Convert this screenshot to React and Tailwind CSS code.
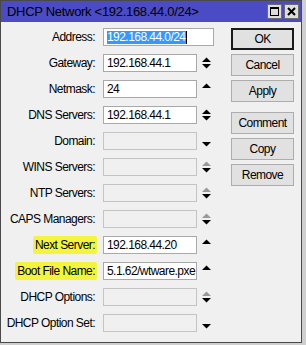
import React from "react";

const font = { fontFamily: '"Liberation Sans", Arial, sans-serif' };

function Arrows({ up, down }) {
  // up/down: "b" black, "g" gray, null none
  const col = (c) => (c === "g" ? "#9a9a9a" : "#000");
  return (
    <svg width="11" height="12" viewBox="0 0 11 12">
      {up && <polygon points="1,5 5.5,0.5 10,5" fill={col(up)} />}
      {down && <polygon points="1,7 5.5,11.5 10,7" fill={col(down)} />}
    </svg>
  );
}

function Row({ label, value, enabled = true, wide = false, up, down, hl = false, selected = false }) {
  return (
    <div className="flex items-center h-[18px]">
      <div className="w-[96px] flex justify-end">
        <span className={"px-[2px] leading-[18px] " + (hl ? "bg-[#f4f43c] rounded-[2px]" : "")}>{label}</span>
      </div>
      <div
        className={
          "ml-[6px] h-[18px] border border-[#a9a9a9] flex items-center pl-[3px] overflow-hidden whitespace-nowrap " +
          (wide ? "w-[111px] " : "w-[94px] ") +
          (enabled ? "bg-white" : "bg-[#f0f0f0] border-[#c4c4c4]")
        }
      >
        {selected ? (
          <span className="bg-[#3399ff] text-white leading-[13px] px-[0px]">{value}</span>
        ) : (
          <span>{value}</span>
        )}
        {selected && <span className="w-[1px] h-[13px] bg-black" />}
      </div>
      {!wide && (
        <div className="w-[18px] flex justify-center items-center">
          {(up || down) && <Arrows up={up} down={down} />}
        </div>
      )}
    </div>
  );
}

function Btn({ children, primary }) {
  return (
    <div
      className={
        "w-[63px] h-[22px] flex items-center justify-center bg-[#e1e1e1] " +
        (primary ? "border-2 border-[#1a1a1a]" : "border border-[#adadad]")
      }
    >
      {children}
    </div>
  );
}

export default function App() {
  return (
    <div className="w-[306px] h-[345px] bg-[#cfcfcf] overflow-hidden text-[12px] tracking-[-0.55px] text-black" style={font}>
      <div className="w-[302px] h-[343px] border border-[#4a4a4a] flex flex-col bg-[#f0f0f0]">
        <div className="h-[21px] bg-[#4b4bc6] flex items-center justify-between pl-[6px] pr-[2px] text-[13px] tracking-[-0.3px]">
          <span className="text-black">DHCP Network &lt;192.168.44.0/24&gt;</span>
          <div className="flex gap-[2px]">
            <div className="w-[15px] h-[15px] bg-[#dcdcdc] border border-[#6c6c6c] flex items-center justify-center">
              <div className="w-[9px] h-[9px] border border-black border-t-2" />
            </div>
            <div className="w-[15px] h-[15px] bg-[#dcdcdc] border border-[#6c6c6c] flex items-center justify-center">
              <svg width="9" height="9" viewBox="0 0 9 9">
                <path d="M1 1 L8 8 M8 1 L1 8" stroke="#000" strokeWidth="2" />
              </svg>
            </div>
          </div>
        </div>
        <div className="flex flex-1 pt-[6px]">
          <div className="flex flex-col gap-[8px]">
            <Row label="Address:" value="192.168.44.0/24" wide selected />
            <Row label="Gateway:" value="192.168.44.1" up="b" down="b" />
            <Row label="Netmask:" value="24" up="b" />
            <Row label="DNS Servers:" value="192.168.44.1" up="b" down="b" />
            <Row label="Domain:" value="" enabled={false} down="b" />
            <Row label="WINS Servers:" value="" enabled={false} up="g" down="b" />
            <Row label="NTP Servers:" value="" enabled={false} up="g" down="b" />
            <Row label="CAPS Managers:" value="" enabled={false} up="g" down="b" />
            <Row label="Next Server:" value="192.168.44.20" up="b" hl />
            <Row label="Boot File Name:" value="5.1.62/wtware.pxe" up="b" hl />
            <Row label="DHCP Options:" value="" enabled={false} up="g" down="b" />
            <Row label="DHCP Option Set:" value="" enabled={false} down="b" />
          </div>
          <div className="ml-[16px] flex flex-col">
            <div className="flex flex-col gap-[4px]">
              <Btn primary>OK</Btn>
              <Btn>Cancel</Btn>
              <Btn>Apply</Btn>
            </div>
            <div className="flex flex-col gap-[4px] mt-[10px]">
              <Btn>Comment</Btn>
              <Btn>Copy</Btn>
              <Btn>Remove</Btn>
            </div>
          </div>
        </div>
      </div>
    </div>
  );
}
